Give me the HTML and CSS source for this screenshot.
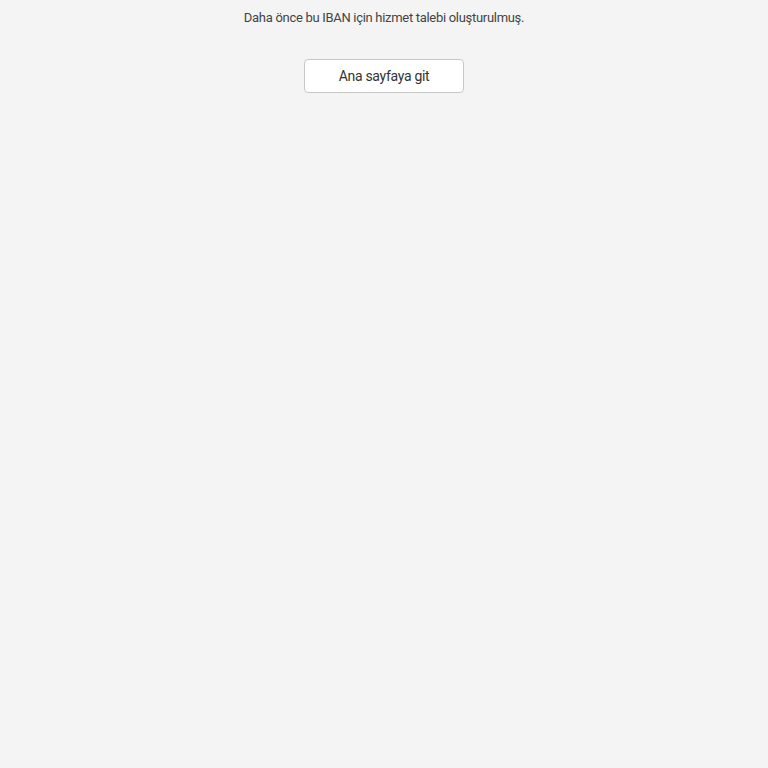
FILE: index.html
```html
<!DOCTYPE html>
<html lang="tr">
<head>
<meta charset="utf-8">
<link rel="stylesheet" href="styles.css">
</head>
<body>
<main class="page">
  <p class="message">Daha önce bu IBAN için hizmet talebi oluşturulmuş.</p>
  <button class="home-btn" type="button">Ana sayfaya git</button>
</main>
</body>
</html>
```
FILE: styles.css
```css
html, body {
  margin: 0;
  padding: 0;
  background: #f4f4f4;
  height: 100%;
}
body {
  font-family: Roboto, "Liberation Sans", sans-serif;
  color: #333333;
}
.page {
  display: flex;
  flex-direction: column;
  align-items: center;
  padding-top: 9px;
}
.message {
  margin: 0;
  font-size: 13px;
  line-height: 18px;
  color: #444444;
  letter-spacing: -0.3px;
}
.home-btn {
  margin-top: 32px;
  width: 160px;
  height: 34px;
  background: #ffffff;
  border: 1px solid #c8c8c8;
  border-radius: 4px;
  font-family: Roboto, "Liberation Sans", sans-serif;
  font-size: 14px;
  letter-spacing: -0.3px;
  color: #333333;
  padding: 0;
}
```
